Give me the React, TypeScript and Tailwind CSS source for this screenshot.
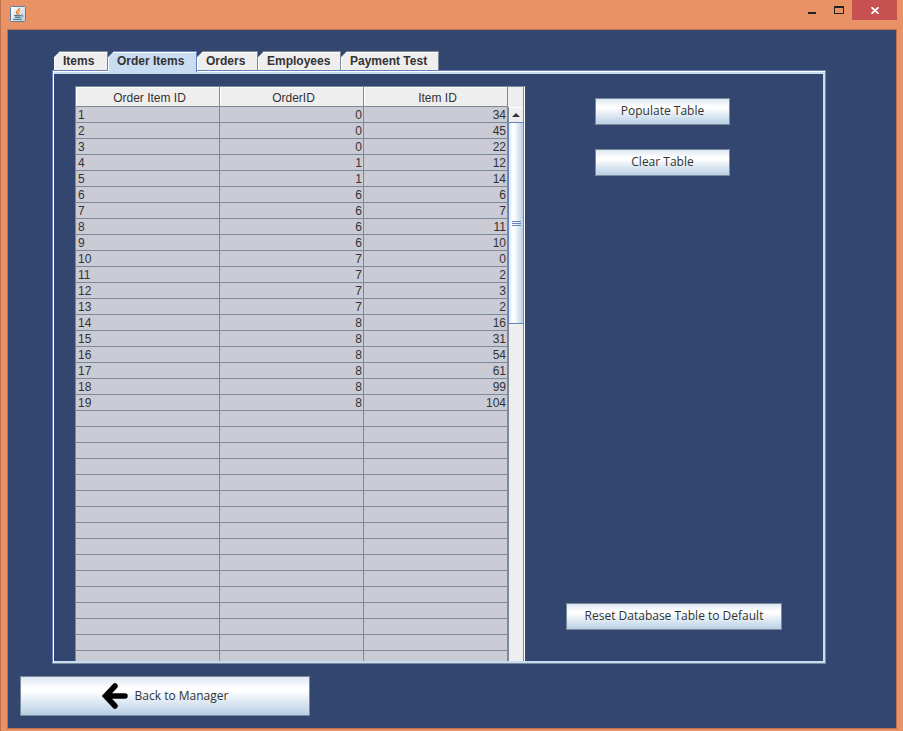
import React from "react";

const tabs = [
  { label: "Items", width: "w-[54px]" },
  { label: "Order Items", width: "w-[89px]" },
  { label: "Orders", width: "w-[61px]" },
  { label: "Employees", width: "w-[83px]" },
  { label: "Payment Test", width: "w-[98px]" },
];

const rows: number[][] = [
  [1, 0, 34], [2, 0, 45], [3, 0, 22], [4, 1, 12], [5, 1, 14], [6, 6, 6],
  [7, 6, 7], [8, 6, 11], [9, 6, 10], [10, 7, 0], [11, 7, 2], [12, 7, 3],
  [13, 7, 2], [14, 8, 16], [15, 8, 31], [16, 8, 54], [17, 8, 61],
  [18, 8, 99], [19, 8, 104],
];
const blankRows = Array.from({ length: 60 }, (_, i) => i);

function JavaIcon() {
  return (
    <svg width="16" height="16" viewBox="0 0 16 16" aria-hidden="true">
      <defs>
        <linearGradient id="java-bg" x1="0" y1="0" x2="1" y2="1">
          <stop offset="0" stopColor="#ffffff" />
          <stop offset="1" stopColor="#c3cdd6" />
        </linearGradient>
      </defs>
      <rect x="0.5" y="0.5" width="15" height="15" rx="1" fill="url(#java-bg)" stroke="#5e7f99" />
      <path d="M9.5 2.2C10 4 6 4.8 6.4 6.6c.2.9 1 1.3 1.4 2.2" fill="none" stroke="#e0701c" strokeWidth="1.3" />
      <path d="M10.6 4.8C9 5.4 8 6.2 8.8 7.2c.4.6.2 1-.2 1.6" fill="none" stroke="#e8892f" strokeWidth="1" />
      <path d="M4 9.6h7M5 11.4h5.5M3.2 13.4h8.6" fill="none" stroke="#4d7896" strokeWidth="1.1" />
      <path d="M11 9c2.4-.6 2.6 1.6.4 2.3" fill="none" stroke="#4d7896" />
    </svg>
  );
}

function Tab({ label, width, selected }: { label: string; width: string; selected: boolean }) {
  return (
    <button
      type="button"
      role="tab"
      aria-selected={selected}
      className={
        "relative border-t border-r pl-[9px] text-left text-[12px] leading-[18px] font-bold whitespace-nowrap text-[#333333] " +
        width +
        (selected
          ? " z-10 -mb-[2px] border-[#6382bf] bg-[#c8ddf2] pb-[2px] shadow-[inset_1px_1px_0_#ffffff]"
          : " border-[#7a8a99] bg-[#eeeeee] shadow-[inset_1px_1px_0_#ffffff]")
      }
    >
      <svg className="absolute -top-px left-0" width="6" height="6" aria-hidden="true">
        <path d="M0 0H6L0 6Z" fill="#33466f" />
        <path d="M0 6L6 0" stroke={selected ? "#6382bf" : "#7a8a99"} fill="none" />
      </svg>
      {label}
    </button>
  );
}

function ActionButton({ children, className }: { children: React.ReactNode; className: string }) {
  return (
    <button
      type="button"
      className={
        "flex items-center justify-center border border-[#7a8a99] bg-[linear-gradient(#dde8f3_0%,#ffffff_30%,#ffffff_36%,#b8cfe5_100%)] font-['Open_Sans','Noto_Sans',sans-serif] text-[12px] leading-[18px] text-[#333333] " +
        className
      }
    >
      {children}
    </button>
  );
}

function ScrollBar() {
  return (
    <div className="flex w-[15px] shrink-0 flex-col border-l border-[#7a8a99] bg-[#eeeeee]">
      <button type="button" aria-label="Scroll up" className="flex h-[15px] items-center justify-center border-t border-white pr-px">
        <svg width="8" height="4" aria-hidden="true"><path d="M0 4L4 0L8 4Z" fill="#333333" /></svg>
      </button>
      <div className="-ml-px flex h-[202px] flex-col items-center justify-center gap-px border border-r-0 border-[#6382bf] bg-[linear-gradient(90deg,#dde8f3_0%,#ffffff_30%,#ffffff_36%,#b8cfe5_100%)]">
        <div className="h-px w-[9px] bg-[#6382bf]" />
        <div className="h-px w-[9px] bg-[#6382bf]" />
        <div className="h-px w-[9px] bg-[#6382bf]" />
      </div>
    </div>
  );
}

function OrderTable() {
  const head = "h-[20px] border-r border-b border-[#7a8a99] bg-[#eeeeee] p-0 pt-[3px] pl-[4px] text-center leading-[16px] font-normal shadow-[inset_1px_1px_0_#ffffff]";
  const cell = "h-[16px] border-r border-b border-[#7a8a99] p-0 pt-[2px] pr-px pl-[2px] leading-[13px]";
  return (
    <div className="flex w-[450px] shrink-0 overflow-hidden border-t border-r border-l border-t-[#7a8a99] border-r-white border-l-[#7a8a99]">
      <div className="min-w-0 flex-1 overflow-hidden">
        <table className="w-full table-fixed border-separate border-spacing-0 bg-[#cbcbd5] text-[12px] text-[#333333]">
          <thead>
            <tr>
              <th scope="col" className={head}>Order Item ID</th>
              <th scope="col" className={head}>OrderID</th>
              <th scope="col" className={head}>Item ID</th>
            </tr>
          </thead>
          <tbody>
            {rows.map((r) => (
              <tr key={r[0]}>
                <td className={cell}>{r[0]}</td>
                <td className={cell + " text-right"}>{r[1]}</td>
                <td className={cell + " text-right"}>{r[2]}</td>
              </tr>
            ))}
            {blankRows.map((i) => (
              <tr key={"blank" + i}>
                <td className={cell} />
                <td className={cell} />
                <td className={cell} />
              </tr>
            ))}
          </tbody>
        </table>
      </div>
      <div className="flex flex-col border-r border-[#7a8a99] bg-[#eeeeee]">
        <div className="h-[20px]" />
        <ScrollBar />
        <div className="flex-1 border-l border-[#7a8a99]" />
      </div>
    </div>
  );
}

export default function App() {
  return (
    <div className="flex h-screen flex-col border-l border-[#c0714f] bg-[#e99265] pr-[6px] pb-[2px] pl-[6px] font-['Liberation_Sans',Arial,sans-serif]">
      <header className="flex h-[29px] shrink-0 items-start justify-between">
        <div className="pt-[6px] pl-[3px]">
          <JavaIcon />
        </div>
        <div className="flex">
          <button type="button" aria-label="Minimize" className="flex h-[20px] w-[27px] items-start justify-center pt-[12px]">
            <svg width="8" height="2" aria-hidden="true"><rect width="8" height="2" fill="#222222" /></svg>
          </button>
          <button type="button" aria-label="Maximize" className="flex h-[20px] w-[27px] items-start justify-center pt-[6px]">
            <svg width="10" height="8" aria-hidden="true"><path d="M0 0H10V8H0ZM1 2V7H9V2Z" fillRule="evenodd" fill="#222222" /></svg>
          </button>
          <button type="button" aria-label="Close" className="flex h-[20px] w-[45px] items-start justify-center bg-[#c75050] pt-[7px]">
            <svg width="8" height="7" viewBox="0 0 8 7" aria-hidden="true"><path d="M0.5 0.2L7.5 6.8M7.5 0.2L0.5 6.8" stroke="#ffffff" strokeWidth="1.7" /></svg>
          </button>
        </div>
      </header>

      <main className="flex min-h-0 flex-1 flex-col border border-[#b9704f] bg-[#33466f] pt-[21px] pb-[12px]">
        <div role="tablist" className="ml-[46px] flex shrink-0">
          {tabs.map((t) => (
            <Tab key={t.label} label={t.label} width={t.width} selected={t.label === "Order Items"} />
          ))}
        </div>
        <section className="mr-[70px] ml-[44px] flex min-h-0 flex-1 flex-col border border-t-[#6382bf] border-r-[#7a8a99] border-b-[#7a8a99] border-l-[#6382bf]">
          <div className="flex min-h-0 flex-1 border-t border-l border-white">
            <div className="flex min-h-0 flex-1 border-t-2 border-r-2 border-b-2 border-[#c8ddf2] pt-[12px] pl-[21px]">
              <OrderTable />
              <div className="flex flex-1 flex-col px-[41px] pt-[12px] pb-[31px]">
                <div className="flex flex-1 flex-col gap-[24px] pl-[29px]">
                  <ActionButton className="h-[27px] w-[135px] pb-px">Populate Table</ActionButton>
                  <ActionButton className="h-[27px] w-[135px] pb-px">Clear Table</ActionButton>
                </div>
                <ActionButton className="h-[27px] pb-px">Reset Database Table to Default</ActionButton>
              </div>
            </div>
          </div>
        </section>
        <ActionButton className="mt-[12px] ml-[12px] h-[40px] w-[290px] shrink-0 gap-[7px]">
          <svg width="26" height="26" viewBox="0 0 26 26" aria-hidden="true">
            <path d="M13 3L3.5 13L13 23M4 13H23" fill="none" stroke="#000000" strokeWidth="5.5" strokeLinecap="round" strokeLinejoin="miter" />
          </svg>
          Back to Manager
        </ActionButton>
      </main>
    </div>
  );
}
